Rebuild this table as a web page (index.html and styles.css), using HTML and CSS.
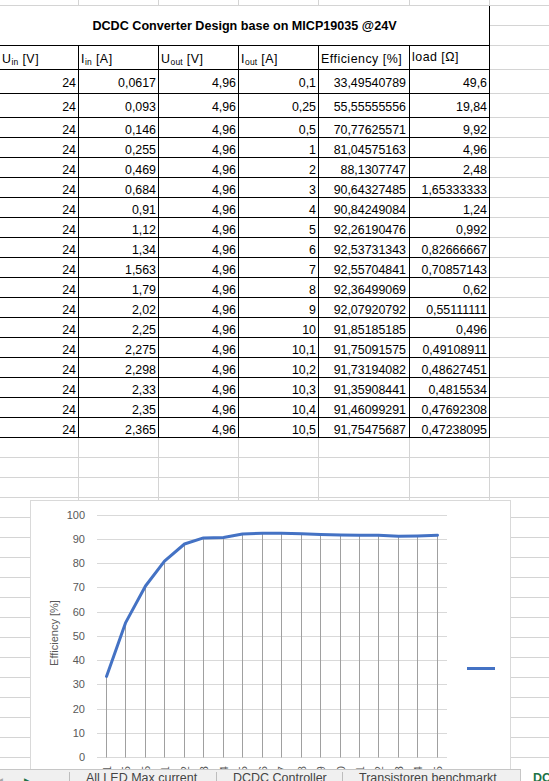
FILE: index.html
```html
<!DOCTYPE html>
<html lang="de">
<head>
<meta charset="utf-8">
<title>DCDC Converter Design</title>
<link rel="stylesheet" href="styles.css">
</head>
<body>
<div class="sheet">
  <div class="grid">
    <div class="c"></div><div class="c"></div><div class="c"></div><div class="c"></div><div class="c"></div><div class="c"></div><div class="c"></div>
    <div class="c b title">DCDC Converter Design base on MICP19035 @24V</div>
    <div class="c"></div>
    <div class="c"></div>
    <div class="c b hd"><span>U<sub>in</sub> [V]</span></div><div class="c b hd"><span>I<sub>in</sub> [A]</span></div><div class="c b hd"><span>U<sub>out</sub> [V]</span></div><div class="c b hd"><span>I<sub>out</sub> [A]</span></div><div class="c b hd"><span>Efficiency [%]</span></div><div class="c b hd load"><span>load [Ω]</span></div><div class="c"></div>
    <div class="c b tall">24</div><div class="c b tall">0,0617</div><div class="c b tall">4,96</div><div class="c b tall">0,1</div><div class="c b tall eff">33,49540789</div><div class="c b tall">49,6</div><div class="c"></div>
    <div class="c b tall">24</div><div class="c b tall">0,093</div><div class="c b tall">4,96</div><div class="c b tall">0,25</div><div class="c b tall eff">55,55555556</div><div class="c b tall">19,84</div><div class="c"></div>
    <div class="c b">24</div><div class="c b">0,146</div><div class="c b">4,96</div><div class="c b">0,5</div><div class="c b eff">70,77625571</div><div class="c b">9,92</div><div class="c"></div>
    <div class="c b">24</div><div class="c b">0,255</div><div class="c b">4,96</div><div class="c b">1</div><div class="c b eff">81,04575163</div><div class="c b">4,96</div><div class="c"></div>
    <div class="c b">24</div><div class="c b">0,469</div><div class="c b">4,96</div><div class="c b">2</div><div class="c b eff">88,1307747</div><div class="c b">2,48</div><div class="c"></div>
    <div class="c b">24</div><div class="c b">0,684</div><div class="c b">4,96</div><div class="c b">3</div><div class="c b eff">90,64327485</div><div class="c b">1,65333333</div><div class="c"></div>
    <div class="c b">24</div><div class="c b">0,91</div><div class="c b">4,96</div><div class="c b">4</div><div class="c b eff">90,84249084</div><div class="c b">1,24</div><div class="c"></div>
    <div class="c b">24</div><div class="c b">1,12</div><div class="c b">4,96</div><div class="c b">5</div><div class="c b eff">92,26190476</div><div class="c b">0,992</div><div class="c"></div>
    <div class="c b">24</div><div class="c b">1,34</div><div class="c b">4,96</div><div class="c b">6</div><div class="c b eff">92,53731343</div><div class="c b">0,82666667</div><div class="c"></div>
    <div class="c b">24</div><div class="c b">1,563</div><div class="c b">4,96</div><div class="c b">7</div><div class="c b eff">92,55704841</div><div class="c b">0,70857143</div><div class="c"></div>
    <div class="c b">24</div><div class="c b">1,79</div><div class="c b">4,96</div><div class="c b">8</div><div class="c b eff">92,36499069</div><div class="c b">0,62</div><div class="c"></div>
    <div class="c b">24</div><div class="c b">2,02</div><div class="c b">4,96</div><div class="c b">9</div><div class="c b eff">92,07920792</div><div class="c b">0,55111111</div><div class="c"></div>
    <div class="c b">24</div><div class="c b">2,25</div><div class="c b">4,96</div><div class="c b">10</div><div class="c b eff">91,85185185</div><div class="c b">0,496</div><div class="c"></div>
    <div class="c b">24</div><div class="c b">2,275</div><div class="c b">4,96</div><div class="c b">10,1</div><div class="c b eff">91,75091575</div><div class="c b">0,49108911</div><div class="c"></div>
    <div class="c b">24</div><div class="c b">2,298</div><div class="c b">4,96</div><div class="c b">10,2</div><div class="c b eff">91,73194082</div><div class="c b">0,48627451</div><div class="c"></div>
    <div class="c b">24</div><div class="c b">2,33</div><div class="c b">4,96</div><div class="c b">10,3</div><div class="c b eff">91,35908441</div><div class="c b">0,4815534</div><div class="c"></div>
    <div class="c b">24</div><div class="c b">2,35</div><div class="c b">4,96</div><div class="c b">10,4</div><div class="c b eff">91,46099291</div><div class="c b">0,47692308</div><div class="c"></div>
    <div class="c b">24</div><div class="c b">2,365</div><div class="c b">4,96</div><div class="c b">10,5</div><div class="c b eff">91,75475687</div><div class="c b">0,47238095</div><div class="c"></div>
    <div class="c"></div><div class="c"></div><div class="c"></div><div class="c"></div><div class="c"></div><div class="c"></div><div class="c"></div>
    <div class="c"></div><div class="c"></div><div class="c"></div><div class="c"></div><div class="c"></div><div class="c"></div><div class="c"></div>
    <div class="c"></div><div class="c"></div><div class="c"></div><div class="c"></div><div class="c"></div><div class="c"></div><div class="c"></div>
    <div class="c"></div><div class="c"></div><div class="c"></div><div class="c"></div><div class="c"></div><div class="c"></div><div class="c"></div>
    <div class="c"></div><div class="c"></div><div class="c"></div><div class="c"></div><div class="c"></div><div class="c"></div><div class="c"></div>
    <div class="c"></div><div class="c"></div><div class="c"></div><div class="c"></div><div class="c"></div><div class="c"></div><div class="c"></div>
    <div class="c"></div><div class="c"></div><div class="c"></div><div class="c"></div><div class="c"></div><div class="c"></div><div class="c"></div>
    <div class="c"></div><div class="c"></div><div class="c"></div><div class="c"></div><div class="c"></div><div class="c"></div><div class="c"></div>
    <div class="c"></div><div class="c"></div><div class="c"></div><div class="c"></div><div class="c"></div><div class="c"></div><div class="c"></div>
    <div class="c"></div><div class="c"></div><div class="c"></div><div class="c"></div><div class="c"></div><div class="c"></div><div class="c"></div>
    <div class="c"></div><div class="c"></div><div class="c"></div><div class="c"></div><div class="c"></div><div class="c"></div><div class="c"></div>
    <div class="c"></div><div class="c"></div><div class="c"></div><div class="c"></div><div class="c"></div><div class="c"></div><div class="c"></div>
    <div class="c"></div><div class="c"></div><div class="c"></div><div class="c"></div><div class="c"></div><div class="c"></div><div class="c"></div>
    <div class="c"></div><div class="c"></div><div class="c"></div><div class="c"></div><div class="c"></div><div class="c"></div><div class="c"></div>
    <div class="c"></div><div class="c"></div><div class="c"></div><div class="c"></div><div class="c"></div><div class="c"></div><div class="c"></div>
    <div class="c"></div><div class="c"></div><div class="c"></div><div class="c"></div><div class="c"></div><div class="c"></div><div class="c"></div>
    <div class="c"></div><div class="c"></div><div class="c"></div><div class="c"></div><div class="c"></div><div class="c"></div><div class="c"></div>
  </div>

  <div class="chart">
    <svg width="479" height="300" viewBox="0 0 479 300" xmlns="http://www.w3.org/2000/svg">
      <g stroke="#d9d9d9" stroke-width="1">
        <line x1="66" x2="416" y1="14.5" y2="14.5"/>
        <line x1="66" x2="416" y1="38.5" y2="38.5"/>
        <line x1="66" x2="416" y1="62.5" y2="62.5"/>
        <line x1="66" x2="416" y1="86.5" y2="86.5"/>
        <line x1="66" x2="416" y1="111.5" y2="111.5"/>
        <line x1="66" x2="416" y1="135.5" y2="135.5"/>
        <line x1="66" x2="416" y1="159.5" y2="159.5"/>
        <line x1="66" x2="416" y1="183.5" y2="183.5"/>
        <line x1="66" x2="416" y1="208.5" y2="208.5"/>
        <line x1="66" x2="416" y1="232.5" y2="232.5"/>
        <line x1="66" x2="416" y1="256.5" y2="256.5"/>
      </g>
      <g class="ax" text-anchor="end">
        <text x="54" y="18">100</text>
        <text x="54" y="42">90</text>
        <text x="54" y="66">80</text>
        <text x="54" y="90">70</text>
        <text x="54" y="115">60</text>
        <text x="54" y="139">50</text>
        <text x="54" y="163">40</text>
        <text x="54" y="187">30</text>
        <text x="54" y="212">20</text>
        <text x="54" y="236">10</text>
        <text x="54" y="260">0</text>
      </g>
      <text class="ax" text-anchor="middle" transform="translate(27,132) rotate(-90)">Efficiency [%]</text>
      <path stroke="#a0a0a0" stroke-width="1" fill="none" d="M75.5 175.4V256.5M94.5 121.9V256.5M114.5 85V256.5M133.5 60.2V256.5M153.5 43V256.5M172.5 36.9V256.5M192.5 36.4V256.5M211.5 33V256.5M231.5 32.3V256.5M250.5 32.3V256.5M270.5 32.8V256.5M289.5 33.4V256.5M309.5 34V256.5M328.5 34.2V256.5M347.5 34.3V256.5M367.5 35.2V256.5M386.5 34.9V256.5M406.5 34.2V256.5"/>
      <polyline fill="none" stroke="#4472c4" stroke-width="3" stroke-linejoin="round" stroke-linecap="round" points="75.5,175.4 94.5,121.9 114.5,85 133.5,60.2 153.5,43 172.5,36.9 192.5,36.4 211.5,33 231.5,32.3 250.5,32.3 270.5,32.8 289.5,33.4 309.5,34 328.5,34.2 347.5,34.3 367.5,35.2 386.5,34.9 406.5,34.2"/>
      <g class="ax" text-anchor="end">
        <text transform="translate(79.5,265) rotate(-90)">0,1</text>
        <text transform="translate(98.5,265) rotate(-90)">0,25</text>
        <text transform="translate(118.5,265) rotate(-90)">0,5</text>
        <text transform="translate(137.5,265) rotate(-90)">1</text>
        <text transform="translate(157.5,265) rotate(-90)">2</text>
        <text transform="translate(176.5,265) rotate(-90)">3</text>
        <text transform="translate(196.5,265) rotate(-90)">4</text>
        <text transform="translate(215.5,265) rotate(-90)">5</text>
        <text transform="translate(235.5,265) rotate(-90)">6</text>
        <text transform="translate(254.5,265) rotate(-90)">7</text>
        <text transform="translate(274.5,265) rotate(-90)">8</text>
        <text transform="translate(293.5,265) rotate(-90)">9</text>
        <text transform="translate(313.5,265) rotate(-90)">10</text>
        <text transform="translate(332.5,265) rotate(-90)">10,1</text>
        <text transform="translate(351.5,265) rotate(-90)">10,2</text>
        <text transform="translate(371.5,265) rotate(-90)">10,3</text>
        <text transform="translate(390.5,265) rotate(-90)">10,4</text>
        <text transform="translate(410.5,265) rotate(-90)">10,5</text>
      </g>
      <line x1="436" x2="464" y1="167.5" y2="167.5" stroke="#4472c4" stroke-width="3"/>
    </svg>
  </div>
</div>

<div class="tabbar">
  <div class="nav"><span class="arr prev">◀</span><span class="arr next">▶</span></div>
  <div class="tab"><span>All LED Max current</span></div>
  <div class="tab t2"><span>DCDC Controller</span></div>
  <div class="tab t3"><span>Transistoren benchmarkt</span></div>
  <div class="tab active"><span>DCDC Converter</span></div>
</div>
</body>
</html>
```

FILE: styles.css
```css
* { box-sizing: border-box; }

html, body {
  margin: 0;
  padding: 0;
}

body {
  width: 549px;
  height: 781px;
  overflow: hidden;
  background: #fff;
  font-family: "Liberation Sans", Arial, sans-serif;
}

.sheet {
  position: relative;
  width: 549px;
  height: 769px;
  overflow: hidden;
}

.grid {
  display: grid;
  width: 570px;
  grid-template-columns: 79px 80px 80px 80px 91px 80px 80px;
  grid-template-rows: 6px 20px 20px 24px 24px 24px repeat(16, 20px) repeat(17, 20px);
  font-size: 12.4px;
  color: #000;
}

.c {
  display: flex;
  align-items: flex-end;
  justify-content: flex-end;
  padding: 0 2px;
  line-height: 14px;
  white-space: nowrap;
  overflow: hidden;
  border-right: 1px solid #d4d4d4;
  border-bottom: 1px solid #d4d4d4;
}

.b { border-color: #000; }

.tall { padding-bottom: 3px; }

.eff { padding-right: 3px; }

.title {
  grid-column: 1 / 7;
  grid-row: span 2;
  justify-content: center;
  align-items: center;
  font-weight: bold;
  font-size: 12.6px;
}

.hd {
  justify-content: flex-start;
  padding-bottom: 3px;
  letter-spacing: 0.5px;
}

.hd sub {
  font-size: 8.5px;
  line-height: 0;
  vertical-align: -2px;
  letter-spacing: 0.2px;
}

.load { padding-bottom: 5px; }

.chart {
  position: absolute;
  left: 30px;
  top: 500px;
  width: 481px;
  height: 300px;
  border: 1px solid #d9d9d9;
  background: #fff;
}

.chart svg { display: block; }

.ax {
  font-family: "Liberation Sans", Arial, sans-serif;
  font-size: 11px;
  fill: #595959;
}

.tabbar {
  display: flex;
  height: 30px;
  font-size: 12.5px;
  color: #444;
  background: #fff;
}

.nav {
  flex: none;
  width: 73px;
  display: flex;
  gap: 21px;
  padding: 6px 0 0 0;
  margin-left: -4px;
  background: #f0f0f0;
  border-top: 1px solid #c6c6c6;
  font-size: 9px;
  line-height: 10px;
}

.arr.prev { color: #a6a6a6; }
.arr.next { color: #217346; }

.tab {
  flex: none;
  width: 147px;
  padding-top: 2px;
  background: #f0f0f0;
  border-top: 1px solid #c6c6c6;
}

.tab span {
  display: block;
  height: 100%;
  padding-left: 16px;
  line-height: 12px;
  white-space: nowrap;
  border-left: 1px solid #bdbdbd;
}

.tab.t2 { width: 126px; }
.tab.t3 { width: 178px; }

.tab.active {
  flex: 1;
  width: auto;
  padding-top: 3px;
  background: #fff;
  border-top: none;
  border-left: 1px solid #c6c6c6;
}

.tab.active span {
  border-left: none;
  padding-left: 12px;
  color: #217346;
  font-weight: bold;
}
```
